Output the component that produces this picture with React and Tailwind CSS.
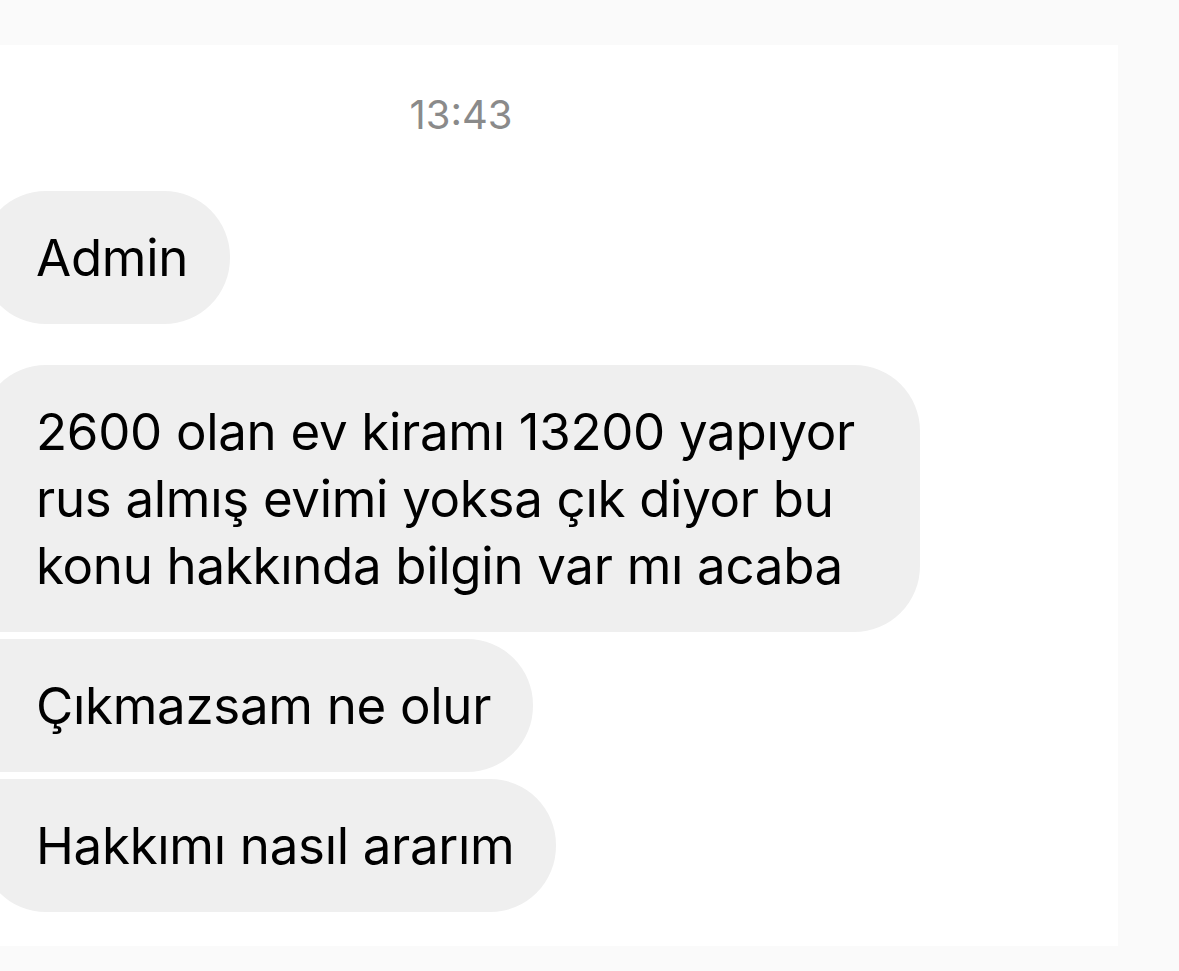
import React from "react";

const messages = [
  { lines: ["Admin"], corners: "rounded-[66px]" },
  {
    lines: [
      "2600 olan ev kiramı 13200 yapıyor",
      "rus almış evimi yoksa çık diyor bu",
      "konu hakkında bilgin var mı acaba",
    ],
    corners: "w-[940px] rounded-[66px] rounded-bl-[12px]",
  },
  { lines: ["Çıkmazsam ne olur"], corners: "rounded-[66px] rounded-tl-[12px] rounded-bl-[12px]" },
  { lines: ["Hakkımı nasıl ararım"], corners: "rounded-[66px] rounded-tl-[12px]" },
];

function Bubble({ lines, corners }) {
  return (
    <div
      className={`-ml-[20px] bg-[#efefef] pl-[56px] pr-[42px] py-[33px] text-[51px] leading-[67px] tracking-[-0.3px] text-black whitespace-nowrap ${corners}`}
    >
      {lines.map((l, i) => (
        <div key={i}>{l}</div>
      ))}
    </div>
  );
}

export default function App() {
  return (
    <div className="min-h-screen bg-[#fafafa] pt-[45px] pb-[25px] pr-[61px] font-['Inter',sans-serif]">
      <div className="h-[901px] bg-white overflow-hidden flex flex-col items-start">
        {/* timestamp */}
        <div className="w-[922px] mt-[46px] text-center text-[40px] leading-[48px] text-[#8a8a8a]">
          13:43
        </div>

        <div className="mt-[52px]">
          <Bubble {...messages[0]} />
        </div>

        {/* grouped messages */}
        <div className="mt-[41px] flex flex-col items-start gap-[7px]">
          {messages.slice(1).map((m, i) => (
            <Bubble key={i} {...m} />
          ))}
        </div>
      </div>
    </div>
  );
}
